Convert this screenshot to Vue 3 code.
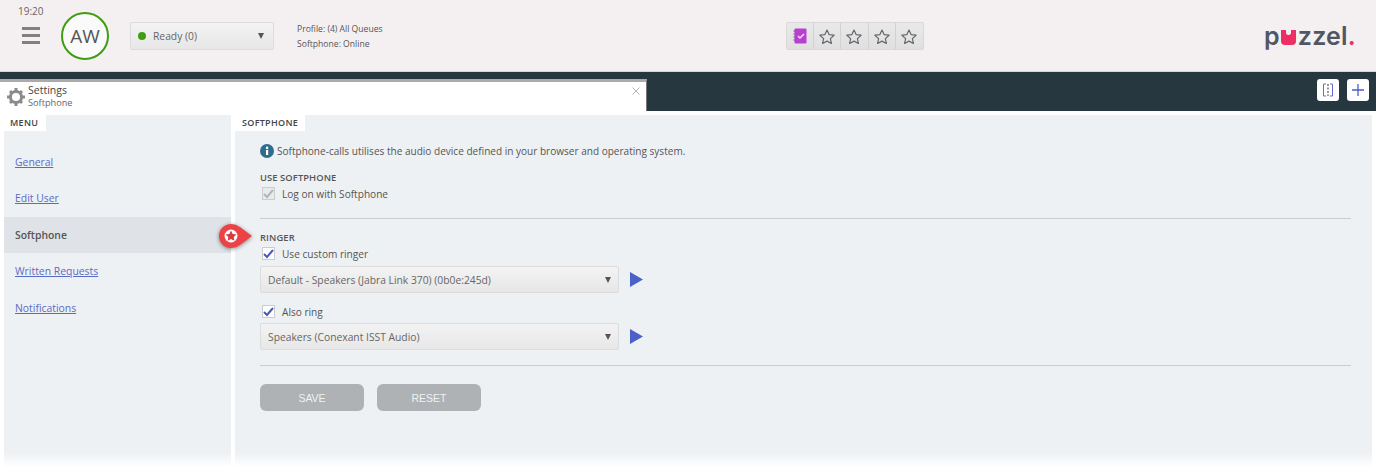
<script setup>
const links = [
  { label: 'General' },
  { label: 'Edit User' },
  { label: 'Softphone', active: true },
  { label: 'Written Requests' },
  { label: 'Notifications' }
]
</script>

<template>
  <div class="app">
    <header class="top">
      <div class="clock-col">
        <span class="clock">19:20</span>
        <svg class="burger" width="20" height="18" viewBox="0 0 20 18"><path d="M1 0h18v3H1zM1 7h18v3H1zM1 14h18v3H1z" fill="#808080"/></svg>
      </div>
      <div class="avatar">AW</div>
      <div class="status select">
        <span class="dot"></span><span class="status-text">Ready (0)</span>
        <span class="caret"></span>
      </div>
      <div class="profile">
        <div>Profile: (4) All Queues</div>
        <div>Softphone: Online</div>
      </div>
      <div class="favs">
        <div class="fav">
          <svg width="14" height="16" viewBox="0 0 14 16"><rect x="1.500" y="0.500" width="12" height="15" rx="1" fill="#b93fd3"/><path d="M0.500 3h2M0.500 6h2M0.500 9h2M0.500 12h2" stroke="#8a4a9c" stroke-width="1"/><path d="M5 8l2 2 4-4" stroke="#f3e3f6" stroke-width="1.500" fill="none"/></svg>
        </div>
        <div v-for="n in 4" :key="n" class="fav">
          <svg width="16" height="15" viewBox="0 0 16 15"><path d="M8 1l2.100 4.600 5 .6-3.700 3.400 1 4.900L8 12.100l-4.400 2.400 1-4.900L.9 6.200l5-.6z" fill="none" stroke="#66686c" stroke-width="1.200" stroke-linejoin="round"/></svg>
        </div>
      </div>
      <div class="logo"><span>p</span><span class="logo-u"><i></i></span><span>zzel</span><span class="logo-dot">.</span></div>
    </header>

    <div class="band">
      <div class="tab">
        <svg class="gear" width="18" height="18" viewBox="0 0 18 18"><circle cx="9" cy="9" r="5.600" fill="none" stroke="#8b8b8b" stroke-width="3"/><path d="M7.500 0h3v3h-3zM7.500 15h3v3h-3zM0 7.500h3v3H0zM15 7.500h3v3h-3zM2 4l2-2 2 2-2 2zM12 14l2-2 2 2-2 2zM14 2l2 2-2 2-2-2zM4 12l2 2-2 2-2-2z" fill="#8b8b8b"/></svg>
        <div class="tab-text">
          <div class="tab-title">Settings</div>
          <div class="tab-sub">Softphone</div>
        </div>
        <svg class="close" width="8" height="8" viewBox="0 0 8 8"><path d="M.5.5l7 7M7.500.5l-7 7" stroke="#b4b4b4" stroke-width="1"/></svg>
      </div>
      <div class="band-btns">
        <div class="band-btn"><svg width="12" height="14" viewBox="0 0 12 14"><path d="M4 1H1.500v12H4M8 1h2.500v12H8" fill="none" stroke="#6a6ad0" stroke-width="1"/><path d="M6 1v12" stroke="#555" stroke-width="1.200" stroke-dasharray="2 1.500"/></svg></div>
        <div class="band-btn"><svg width="14" height="14" viewBox="0 0 14 14"><path d="M7 1v12M1 7h12" stroke="#4a5fc8" stroke-width="1.300"/></svg></div>
      </div>
    </div>

    <main class="body">
      <aside class="panel menu">
        <div class="panel-tag menu-tag">MENU</div>
        <nav class="nav">
          <div v-for="l in links" :key="l.label" class="nav-item" :class="{ active: l.active }">
            <span v-if="l.active">{{ l.label }}</span>
            <a v-else href="#" @click.prevent>{{ l.label }}</a>
          </div>
        </nav>
      </aside>
      <section class="panel content">
        <div class="panel-tag">SOFTPHONE</div>
        <div class="inner">
          <div class="info">
            <svg width="14" height="14" viewBox="0 0 14 14"><circle cx="7" cy="7" r="7" fill="#2f6d8e"/><rect x="6" y="6" width="2.200" height="5" fill="#fff"/><circle cx="7.100" cy="3.900" r="1.300" fill="#fff"/></svg>
            <span>Softphone-calls utilises the audio device defined in your browser and operating system.</span>
          </div>
          <h4 class="sec first">USE SOFTPHONE</h4>
          <label class="check">
            <span class="box disabled"><svg width="11" height="10" viewBox="0 0 11 10"><path d="M1 5l3 3 6-7" fill="none" stroke="#b5b5b5" stroke-width="2"/></svg></span>
            Log on with Softphone
          </label>
          <hr class="rule one" />
          <h4 class="sec">RINGER</h4>
          <label class="check">
            <span class="box"><svg width="11" height="10" viewBox="0 0 11 10"><path d="M1 5l3 3 6-7" fill="none" stroke="#4a55c4" stroke-width="2"/></svg></span>
            Use custom ringer
          </label>
          <div class="row first-row">
            <div class="select wide"><span>Default - Speakers (Jabra Link 370) (0b0e:245d)</span><span class="caret"></span></div>
            <svg width="13" height="15" viewBox="0 0 13 15"><path d="M0 0l13 7.500L0 15z" fill="#4a62c8"/></svg>
          </div>
          <label class="check also">
            <span class="box"><svg width="11" height="10" viewBox="0 0 11 10"><path d="M1 5l3 3 6-7" fill="none" stroke="#4a55c4" stroke-width="2"/></svg></span>
            Also ring
          </label>
          <div class="row">
            <div class="select wide"><span>Speakers (Conexant ISST Audio)</span><span class="caret"></span></div>
            <svg width="13" height="15" viewBox="0 0 13 15"><path d="M0 0l13 7.500L0 15z" fill="#4a62c8"/></svg>
          </div>
          <hr class="rule two" />
          <div class="buttons">
            <button class="btn">SAVE</button>
            <button class="btn">RESET</button>
          </div>
        </div>
        <svg class="pin" width="38" height="30" viewBox="0 0 38 30">
          <path d="M15 2c5 0 9 3 13 6l8 6-8 6c-4 3-8 6-13 6a12 12 0 0 1 0-24z" fill="#ec4245"/>
          <circle cx="15" cy="14" r="6.500" fill="#fff"/>
          <path d="M15 8.500l1.700 3.400 3.800.5-2.800 2.600.7 3.800-3.400-1.800-3.400 1.800.7-3.800-2.800-2.600 3.800-.5z" fill="#d93a3e"/>
        </svg>
      </section>
    </main>
  </div>
</template>

<style>
html, body { margin: 0; background: #fff; }
</style>

<style scoped>
.app {
  width: 1376px;
  height: 472px;
  overflow: hidden;
  background: #fff;
  font-family: "Open Sans", "Noto Sans", sans-serif;
  font-size: 10.300px;
  color: #555;
}
.top {
  height: 71px;
  background: #f4f0f1;
  border-bottom: 1px solid #d6d6d6;
  display: flex;
  align-items: flex-start;
  box-sizing: content-box;
}
.clock-col { width: 61px; display: flex; flex-direction: column; align-items: flex-start; padding: 5px 0 0 18px; box-sizing: border-box; }
.clock { font-size: 10px; line-height: 13px; color: #666; }
.burger { margin: 9px 0 0 3px; }
.avatar {
  width: 48px; height: 48px; margin-top: 12px; box-sizing: border-box;
  border: 2px solid #3f9d12; border-radius: 50%; background: #fbfafa;
  display: flex; align-items: center; justify-content: center;
  font-size: 19px; color: #555;
}
.select {
  display: flex; align-items: center; justify-content: space-between;
  box-sizing: border-box;
  background: linear-gradient(#f3f3f3, #e7e7e7);
  border: 1px solid #dcdcdc; border-radius: 2px;
  color: #666;
}
.status { width: 144px; height: 28px; margin: 22px 0 0 21px; padding: 0 9px 0 7px; justify-content: flex-start; }
.dot { width: 8px; height: 8px; background: #3f9d12; border-radius: 50%; margin-right: 7px; }
.status-text { flex: 1; }
.caret { width: 0; height: 0; border-left: 3.500px solid transparent; border-right: 3.500px solid transparent; border-top: 6px solid #555; }
.profile { margin: 22px 0 0 23px; font-size: 8.600px; line-height: 14.500px; color: #555; width: 489px; }
.favs {
  margin-top: 22px; display: flex; height: 28px; box-sizing: border-box;
  border: 1px solid #d9d9d9; border-radius: 2px; background: linear-gradient(#e9e9e9, #e0e0e0);
}
.fav { width: 27.200px; display: flex; align-items: center; justify-content: center; border-right: 1px solid #d2d2d2; box-sizing: border-box; }
.fav:last-child { border-right: none; }
.logo {
  margin: 16px 0 0 auto; width: 112px; font-size: 25px; line-height: 40px; font-weight: 600;
  font-family: "Inter", "Open Sans", sans-serif; color: #505663; display: flex; letter-spacing: .2px;
}
.logo-u { width: 15px; height: 15px; margin: 13.500px 1.500px 0; background: #ee2f66; border-radius: 0 0 4px 4px; position: relative; }
.logo-u i { position: absolute; left: 5px; top: 0; width: 5px; height: 5px; background: #f4f0f1; border-radius: 0 0 2.500px 2.500px; }
.logo-dot { color: #ee2f66; }
.band { height: 39px; background: #263740; display: flex; align-items: flex-end; justify-content: space-between; }
.tab {
  width: 647px; height: 32px; box-sizing: border-box; background: #fff;
  border-top: 3px solid #ababab; border-right: 1px solid #777;
  display: flex; align-items: flex-start; padding: 3px 7px 0; position: relative;
}
.gear { margin-right: 3px; margin-top: 3px; }
.tab-text { flex: 1; line-height: 11.500px; }
.tab-title { font-size: 10.500px; color: #444; }
.tab-sub { font-size: 9.200px; color: #666; }
.close { margin: 2px -1px 0 0; }
.band-btns { display: flex; gap: 8px; padding: 0 7px 10px 0; }
.band-btn { width: 22px; height: 22px; background: #fff; border-radius: 3px; display: flex; align-items: center; justify-content: center; }
.body { display: flex; gap: 4px; padding: 4px 4px 0; height: 357px; box-sizing: border-box; }
.panel {
  background: linear-gradient(#eef1f4 calc(100% - 14px), #fff);
  position: relative; height: 352px;
}
.menu { width: 227px; flex: none; }
.content { flex: 1; }
.panel-tag { position: absolute; left: 0; top: 0; background: #fff; font-size: 9px; font-weight: 600; color: #444; letter-spacing: .3px; line-height: 16px; height: 16px; padding: 0 7px; }
.menu-tag { left: -4px; padding-left: 10px; padding-right: 8px; }
.nav { padding-top: 28.500px; }
.nav-item { height: 36.500px; display: flex; align-items: center; padding-left: 11px; font-size: 10.400px; }
.nav-item a { color: #5a6bc6; }
.nav-item.active { background: #dfe3e7; font-weight: 600; color: #555; }
.inner { padding: 28px 21px 0 25px; }
.info { display: flex; align-items: center; gap: 3px; height: 16px; font-size: 10.050px; color: #555; }
.sec { margin: 0; font-size: 9.350px; font-weight: 600; color: #555; line-height: 14px; letter-spacing: .1px; }
.sec.first { margin-top: 12px; }
.check { display: flex; align-items: center; gap: 7px; height: 17px; padding-left: 2px; font-size: 10.100px; color: #555; }
.box { width: 13px; height: 13px; box-sizing: border-box; background: #fff; border: 1px solid #ccc; display: flex; align-items: center; justify-content: center; }
.box.disabled { background: #e8eaec; }
.rule { border: none; border-top: 1px solid #c9ccd0; margin: 0; }
.rule.one { margin-top: 16px; margin-bottom: 12px; }
.rule.two { margin-top: 15px; margin-bottom: 18px; }
.row { display: flex; align-items: center; gap: 11px; margin-top: 3px; }
.row.first-row { margin-top: 4px; }
.wide { width: 359px; height: 27px; padding: 0 7px; }
.also { margin-top: 10px; }
.buttons { display: flex; gap: 13px; }
.btn {
  width: 104px; height: 27px; border: none; border-radius: 6px; background: #aeb2b5; color: #eef1f3;
  font-family: "Liberation Sans", Arial, sans-serif; font-size: 10.500px; padding: 0;
}
.pin { position: absolute; left: -19px; top: 107px; filter: drop-shadow(0 1px 2px rgba(0,0,0,.45)); }
</style>
